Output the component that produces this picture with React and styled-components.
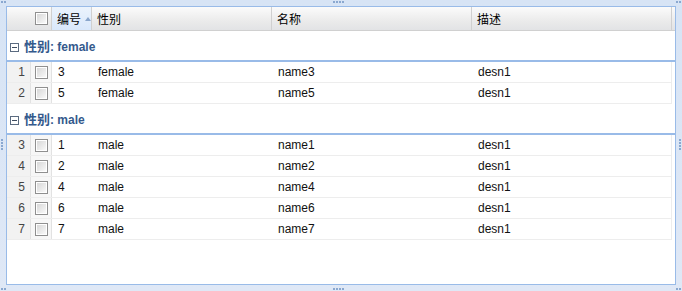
import React from "react";
import styled, { createGlobalStyle } from "styled-components";

const Global = createGlobalStyle`
  html, body { margin: 0; padding: 0; background: #fff; }
  body { font-family: "Liberation Sans", Arial, sans-serif; font-size: 12px; }
  * { box-sizing: border-box; }
`;

const Frame = styled.div`
  position: relative;
  width: 682px;
  height: 291px;
  padding: 6px 6px 6px 6px;
  background: linear-gradient(#d7e4f5, #dfe8f6);
  display: flex;
`;

const Panel = styled.div`
  flex: 1;
  background: #fff;
  border: 1px solid #99bbe8;
  display: flex;
  flex-direction: column;
  overflow: hidden;
`;

const HeaderRow = styled.div`
  display: flex;
  height: 24px;
  background: linear-gradient(#fbfbfb, #ebebeb 60%, #e2e3e5);
  border-bottom: 1px solid #d0d0d0;
`;

const HeadCell = styled.div`
  width: ${(p) => p.w}px;
  flex: none;
  display: flex;
  align-items: center;
  white-space: nowrap;
  padding-left: ${(p) => (p.center ? 0 : 5)}px;
  justify-content: ${(p) => (p.center ? "center" : "flex-start")};
  border-right: 1px solid ${(p) => (p.sep ? "#d0d0d0" : "transparent")};
  font-family: "Noto Sans CJK SC", "Liberation Sans", sans-serif;
  font-size: 12px;
  color: #000;
  background: ${(p) =>
    p.sorted ? "linear-gradient(#ebf3fd, #d9e8fb)" : "transparent"};
`;

const SortArrow = styled.span`
  width: 0;
  height: 0;
  margin-left: 4px;
  border-left: 3px solid transparent;
  border-right: 3px solid transparent;
  border-bottom: 4px solid #8aa6cc;
`;

const Body = styled.div`
  flex: 1;
  display: flex;
  flex-direction: column;
`;

const GroupHead = styled.div`
  height: ${(p) => p.h}px;
  display: flex;
  align-items: flex-end;
  padding: 0 0 5px 3px;
  border-bottom: 2px solid #99bbe8;
  color: #34598c;
  font-weight: bold;
  font-size: 12px;
  font-family: "Liberation Sans", Arial, sans-serif;
  gap: 5px;
`;

const GroupLabel = styled.span`
  font-family: "Noto Sans CJK SC", sans-serif;
  font-weight: bold;
  font-size: 13px;
`;

const Toggle = styled.span`
  width: 9px;
  height: 9px;
  border: 1px solid #5b6b80;
  position: relative;
  margin-bottom: 3px;
  background: #fff;
  &::after {
    content: "";
    position: absolute;
    left: 1px;
    right: 1px;
    top: 3px;
    height: 1px;
    background: #3f4d60;
  }
`;

const Row = styled.div`
  display: flex;
  height: 21px;
  width: 665px;
  border-bottom: 1px solid #ededed;
  border-right: 1px solid #ededed;
`;

const Cell = styled.div`
  width: ${(p) => p.w}px;
  flex: none;
  display: flex;
  align-items: center;
  padding-left: 6px;
  color: #111;
  font-size: 12px;
`;

const NumCell = styled.div`
  width: 24px;
  flex: none;
  display: flex;
  align-items: center;
  justify-content: flex-end;
  padding-right: 5px;
  color: #444;
  background: #f2f2f2;
  border-right: 1px solid #e2e2e2;
`;

const CheckCell = styled.div`
  width: 21px;
  flex: none;
  display: flex;
  align-items: center;
  justify-content: center;
  background: #f7f7f7;
  border-right: 1px solid #e2e2e2;
`;

const Check = styled.span`
  width: 13px;
  height: 13px;
  border: 1px solid #8f8f8f;
  background: linear-gradient(135deg, #d4d4d4, #f0f0f0 70%, #fff);
  box-shadow: inset 0 0 0 1px #fff;
`;

const Handle = styled.div`
  position: absolute;
  display: flex;
  flex-direction: ${(p) => (p.v ? "column" : "row")};
  gap: 1px;
  ${(p) => p.pos}
`;

const Dot = styled.span`
  width: 2px;
  height: 2px;
  background: #8aa8d0;
`;

const Dots = ({ n, v, pos }) => (
  <Handle v={v} pos={pos}>
    {Array.from({ length: n }).map((_, i) => (
      <Dot key={i} />
    ))}
  </Handle>
);

const cols = [
  { key: "id", w: 40 },
  { key: "sex", w: 180 },
  { key: "name", w: 200 },
  { key: "desc", w: 200 },
];

const groups = [
  {
    label: "female",
    h: 31,
    rows: [
      ["3", "female", "name3", "desn1"],
      ["5", "female", "name5", "desn1"],
    ],
  },
  {
    label: "male",
    h: 31,
    rows: [
      ["1", "male", "name1", "desn1"],
      ["2", "male", "name2", "desn1"],
      ["4", "male", "name4", "desn1"],
      ["6", "male", "name6", "desn1"],
      ["7", "male", "name7", "desn1"],
    ],
  },
];

export default function App() {
  let n = 0;
  return (
    <>
      <Global />
      <Frame>
        <Panel>
          <HeaderRow>
            <HeadCell w={24} />
            <HeadCell w={21} center sep>
              <Check />
            </HeadCell>
            <HeadCell w={40} sorted sep>
              编号
              <SortArrow />
            </HeadCell>
            <HeadCell w={180} sep>性别</HeadCell>
            <HeadCell w={200} sep>名称</HeadCell>
            <HeadCell w={200} sep>描述</HeadCell>
          </HeaderRow>
          <Body>
            {groups.map((g) => (
              <React.Fragment key={g.label}>
                <GroupHead h={g.h}>
                  <Toggle />
                  <span>
                    <GroupLabel>性别</GroupLabel>: {g.label}
                  </span>
                </GroupHead>
                {g.rows.map((r) => {
                  n += 1;
                  return (
                    <Row key={r[0]}>
                      <NumCell>{n}</NumCell>
                      <CheckCell>
                        <Check />
                      </CheckCell>
                      {r.map((v, i) => (
                        <Cell key={i} w={cols[i].w - (i === 3 ? 1 : 0)}>
                          {v}
                        </Cell>
                      ))}
                    </Row>
                  );
                })}
              </React.Fragment>
            ))}
          </Body>
        </Panel>
        <Dots n={4} pos="top: 1px; left: 333px;" />
        <Dots n={4} pos="bottom: 1px; left: 333px;" />
        <Dots n={4} v pos="left: 1px; top: 139px;" />
        <Dots n={4} v pos="right: 1px; top: 139px;" />
        <Dots n={2} pos="top: 1px; left: 1px;" />
        <Dots n={2} pos="top: 1px; right: 1px;" />
        <Dots n={2} pos="bottom: 1px; left: 1px;" />
        <Dots n={2} pos="bottom: 1px; right: 1px;" />
      </Frame>
    </>
  );
}
